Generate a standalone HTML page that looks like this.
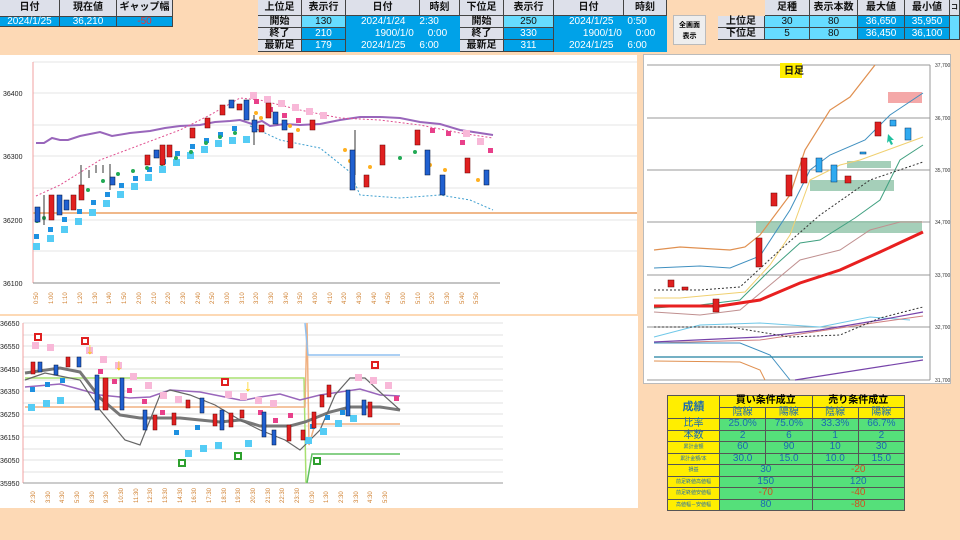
<!DOCTYPE html><html><head><meta charset="utf-8"><style>
*{margin:0;padding:0;box-sizing:border-box}
body{width:960px;height:540px;background:#fdd9b5;position:relative;overflow:hidden;font-family:"Liberation Sans","Noto Sans CJK JP",sans-serif;}
.c{position:absolute;font-size:10px;text-align:center;line-height:12px;border-right:1px solid #444;border-bottom:1px solid #444}
.h{background:#dde0ea;color:#111;font-weight:bold}
.b{background:#00a2e8;color:#fff}
.lb{background:#66dcff;color:#111}
.w{position:absolute;background:#fff}
table{position:absolute;border-collapse:collapse;font-size:10px}
td{border:1px solid #555;text-align:center;height:11.5px;padding:0;line-height:10px}
</style></head><body>
<div class="c h" style="left:0;top:0;width:60px;height:17px;line-height:16px">日付</div>
<div class="c h" style="left:60px;top:0;width:57px;height:17px;line-height:16px">現在値</div>
<div class="c h" style="left:117px;top:0;width:56px;height:17px;line-height:16px">ギャップ幅</div>
<div class="c b" style="left:0;top:17px;width:60px;height:10px;line-height:9px">2024/1/25</div>
<div class="c b" style="left:60px;top:17px;width:57px;height:10px;line-height:9px">36,210</div>
<div class="c b" style="left:117px;top:17px;width:56px;height:10px;line-height:9px;color:#e33">-50</div>
<div class="c h" style="left:258px;top:0;width:44px;height:16px;line-height:15px">上位足</div>
<div class="c h" style="left:302px;top:0;width:44px;height:16px;line-height:15px">表示行</div>
<div class="c h" style="left:346px;top:0;width:74px;height:16px;line-height:15px">日付</div>
<div class="c h" style="left:420px;top:0;width:40px;height:16px;line-height:15px">時刻</div>
<div class="c h" style="left:460px;top:0;width:44px;height:16px;line-height:15px">下位足</div>
<div class="c h" style="left:504px;top:0;width:50px;height:16px;line-height:15px">表示行</div>
<div class="c h" style="left:554px;top:0;width:70px;height:16px;line-height:15px">日付</div>
<div class="c h" style="left:624px;top:0;width:43px;height:16px;line-height:15px">時刻</div>
<div class="c h" style="left:258px;top:16px;width:44px;height:12px">開始</div>
<div class="c h" style="left:258px;top:28px;width:44px;height:12px">終了</div>
<div class="c h" style="left:258px;top:40px;width:44px;height:12px">最新足</div>
<div class="c lb" style="left:302px;top:16px;width:44px;height:12px">130</div>
<div class="c b" style="left:302px;top:28px;width:44px;height:12px">210</div>
<div class="c b" style="left:302px;top:40px;width:44px;height:12px">179</div>
<div class="c b" style="left:346px;top:16px;width:114px;height:36px;border:none;text-align:left;line-height:12px;padding-left:15px">2024/1/24&nbsp;&nbsp;&nbsp;&nbsp;&nbsp;2:30<br>&nbsp;&nbsp;&nbsp;&nbsp;&nbsp;1900/1/0&nbsp;&nbsp;&nbsp;&nbsp;&nbsp;0:00<br>2024/1/25&nbsp;&nbsp;&nbsp;&nbsp;&nbsp;6:00</div>
<div class="c h" style="left:460px;top:16px;width:44px;height:12px">開始</div>
<div class="c h" style="left:460px;top:28px;width:44px;height:12px">終了</div>
<div class="c h" style="left:460px;top:40px;width:44px;height:12px">最新足</div>
<div class="c lb" style="left:504px;top:16px;width:50px;height:12px">250</div>
<div class="c b" style="left:504px;top:28px;width:50px;height:12px">330</div>
<div class="c b" style="left:504px;top:40px;width:50px;height:12px">311</div>
<div class="c b" style="left:554px;top:16px;width:113px;height:36px;border:none;text-align:left;line-height:12px;padding-left:15px">2024/1/25&nbsp;&nbsp;&nbsp;&nbsp;&nbsp;0:50<br>&nbsp;&nbsp;&nbsp;&nbsp;&nbsp;1900/1/0&nbsp;&nbsp;&nbsp;&nbsp;&nbsp;0:00<br>2024/1/25&nbsp;&nbsp;&nbsp;&nbsp;&nbsp;6:00</div>
<div style="position:absolute;left:673px;top:15px;width:33px;height:30px;background:#eee;border:1px solid #bbb;font-size:7px;line-height:11px;text-align:center;padding-top:4px;font-weight:bold">全画面<br>表示</div>
<div class="c h" style="left:765px;top:0;width:45px;height:16px;line-height:15px">足種</div>
<div class="c h" style="left:810px;top:0;width:48px;height:16px;line-height:15px">表示本数</div>
<div class="c h" style="left:858px;top:0;width:47px;height:16px;line-height:15px">最大値</div>
<div class="c h" style="left:905px;top:0;width:45px;height:16px;line-height:15px">最小値</div>
<div class="c h" style="left:950px;top:0;width:10px;height:16px;line-height:15px;font-size:7px">コマ</div>
<div class="c h" style="left:718px;top:16px;width:47px;height:12px">上位足</div>
<div class="c h" style="left:718px;top:28px;width:47px;height:12px">下位足</div>
<div class="c lb" style="left:765px;top:16px;width:45px;height:12px">30</div>
<div class="c lb" style="left:765px;top:28px;width:45px;height:12px">5</div>
<div class="c lb" style="left:810px;top:16px;width:48px;height:12px">80</div>
<div class="c lb" style="left:810px;top:28px;width:48px;height:12px">80</div>
<div class="c b" style="left:858px;top:16px;width:47px;height:12px">36,650</div>
<div class="c b" style="left:858px;top:28px;width:47px;height:12px">36,450</div>
<div class="c b" style="left:905px;top:16px;width:45px;height:12px">35,950</div>
<div class="c b" style="left:905px;top:28px;width:45px;height:12px">36,100</div>
<div class="c lb" style="left:950px;top:16px;width:10px;height:24px"></div>

<div class="w" style="left:0;top:55px;width:637px;height:259px"></div>
<svg style="position:absolute;left:0;top:0" width="960" height="540" font-family="Liberation Sans" >
<g font-size="7" fill="#222"><text x="3" y="96">36400</text><text x="3" y="159">36300</text><text x="3" y="223">36200</text><text x="3" y="286">36100</text></g>
<g stroke="#e4e4e4" stroke-width="1"><line x1="33" y1="62" x2="637" y2="62"/><line x1="33" y1="93" x2="637" y2="93"/><line x1="33" y1="125" x2="637" y2="125"/><line x1="33" y1="156" x2="637" y2="156"/><line x1="33" y1="188" x2="637" y2="188"/><line x1="33" y1="220" x2="637" y2="220"/><line x1="33" y1="251" x2="637" y2="251"/></g>
<line x1="33" y1="62" x2="33" y2="283" stroke="#f2a0a0"/>
<line x1="33" y1="283" x2="500" y2="283" stroke="#888"/>
<line x1="33" y1="213" x2="637" y2="213" stroke="#f0b88a" stroke-width="2"/>
<polyline fill="none" stroke="#9966bb" stroke-width="2" points="36,143 44,143 52,138 60,140 68,140 80,136 100,132 112,136 130,133 150,131 165,128 180,126 200,125 215,122 230,121 240,120 252,124 262,121 270,126 285,124 300,125 320,124 340,120 360,117 380,117 400,118 420,122 440,124 460,130 480,133 493,135"/>
<polyline fill="none" stroke="#e05090" stroke-width="1" stroke-dasharray="2,2" points="36,196 60,185 100,160 140,145 180,130 210,115 240,98 260,100 300,110 340,118 380,120 420,125 460,133 493,138"/>
<polyline fill="none" stroke="#40a0d0" stroke-width="1" stroke-dasharray="2,2" points="250,126 280,140 320,148 350,172 360,195 400,198 440,195 470,200 493,210"/>
<g fill="#55ccf5"><rect x="33" y="243" width="7" height="7"/><rect x="47" y="235" width="7" height="7"/><rect x="61" y="226" width="7" height="7"/><rect x="75" y="218" width="7" height="7"/><rect x="89" y="209" width="7" height="7"/><rect x="103" y="200" width="7" height="7"/><rect x="117" y="191" width="7" height="7"/><rect x="131" y="183" width="7" height="7"/><rect x="145" y="174" width="7" height="7"/><rect x="159" y="166" width="7" height="7"/><rect x="173" y="159" width="7" height="7"/><rect x="187" y="152" width="7" height="7"/><rect x="201" y="146" width="7" height="7"/><rect x="215" y="140" width="7" height="7"/><rect x="229" y="137" width="7" height="7"/><rect x="243" y="136" width="7" height="7"/></g>
<g fill="#1e90e0"><rect x="34" y="234" width="5" height="5"/><rect x="48" y="227" width="5" height="5"/><rect x="62" y="217" width="5" height="5"/><rect x="77" y="209" width="5" height="5"/><rect x="91" y="200" width="5" height="5"/><rect x="105" y="192" width="5" height="5"/><rect x="119" y="183" width="5" height="5"/><rect x="133" y="176" width="5" height="5"/><rect x="147" y="167" width="5" height="5"/><rect x="161" y="159" width="5" height="5"/><rect x="175" y="151" width="5" height="5"/><rect x="190" y="144" width="5" height="5"/><rect x="204" y="138" width="5" height="5"/><rect x="218" y="132" width="5" height="5"/><rect x="232" y="126" width="5" height="5"/></g>
<g fill="#22aa55"><circle cx="37" cy="221" r="2"/><circle cx="44" cy="218" r="2"/><circle cx="52" cy="212" r="2"/><circle cx="60" cy="208" r="2"/><circle cx="73" cy="204" r="2"/><circle cx="88" cy="190" r="2"/><circle cx="103" cy="181" r="2"/><circle cx="118" cy="174" r="2"/><circle cx="133" cy="171" r="2"/><circle cx="147" cy="168" r="2"/><circle cx="162" cy="164" r="2"/><circle cx="176" cy="158" r="2"/><circle cx="191" cy="152" r="2"/><circle cx="206" cy="143" r="2"/><circle cx="220" cy="137" r="2"/><circle cx="235" cy="133" r="2"/><circle cx="400" cy="158" r="2"/><circle cx="415" cy="152" r="2"/></g>
<g fill="#ffb020"><circle cx="256" cy="113" r="2"/><circle cx="261" cy="118" r="2"/><circle cx="290" cy="126" r="2"/><circle cx="298" cy="130" r="2"/><circle cx="345" cy="150" r="2"/><circle cx="350" cy="161" r="2"/><circle cx="370" cy="167" r="2"/><circle cx="430" cy="165" r="2"/><circle cx="445" cy="170" r="2"/><circle cx="478" cy="180" r="2"/></g>
<g fill="#f8b8d8"><rect x="250" y="92" width="7" height="7"/><rect x="264" y="96" width="7" height="7"/><rect x="278" y="100" width="7" height="7"/><rect x="292" y="104" width="7" height="7"/><rect x="306" y="108" width="7" height="7"/><rect x="320" y="112" width="7" height="7"/><rect x="463" y="130" width="7" height="7"/><rect x="477" y="138" width="7" height="7"/></g>
<g fill="#e8408a"><rect x="254" y="99" width="5" height="5"/><rect x="268" y="107" width="5" height="5"/><rect x="282" y="113" width="5" height="5"/><rect x="296" y="118" width="5" height="5"/><rect x="310" y="122" width="5" height="5"/><rect x="430" y="128" width="5" height="5"/><rect x="446" y="131" width="5" height="5"/><rect x="460" y="140" width="5" height="5"/><rect x="488" y="148" width="5" height="5"/></g>
<g stroke="#333" stroke-width="1"><line x1="44" y1="195" x2="44" y2="225"/><line x1="81" y1="165" x2="81" y2="200"/><line x1="89" y1="170" x2="89" y2="178"/><line x1="96" y1="165" x2="96" y2="173"/><line x1="103" y1="165" x2="103" y2="173"/><line x1="110" y1="164" x2="110" y2="190"/><line x1="254" y1="115" x2="254" y2="145"/><line x1="355" y1="130" x2="355" y2="175"/></g>
<g fill="#e02020" stroke="#600" stroke-width=".5"><rect x="49" y="195" width="5" height="25"/><rect x="71" y="195" width="5" height="15"/><rect x="79" y="185" width="5" height="15"/><rect x="145" y="155" width="5" height="10"/><rect x="160" y="145" width="5" height="20"/><rect x="167" y="145" width="5" height="12"/><rect x="190" y="128" width="5" height="10"/><rect x="205" y="118" width="5" height="10"/><rect x="220" y="105" width="5" height="10"/><rect x="237" y="104" width="5" height="6"/><rect x="259" y="125" width="5" height="7"/><rect x="266" y="103" width="5" height="15"/><rect x="288" y="133" width="5" height="15"/><rect x="310" y="120" width="5" height="10"/><rect x="364" y="175" width="5" height="12"/><rect x="380" y="145" width="5" height="20"/><rect x="415" y="130" width="5" height="15"/><rect x="465" y="158" width="5" height="15"/></g>
<g fill="#2060d0" stroke="#013" stroke-width=".5"><rect x="35" y="207" width="5" height="15"/><rect x="57" y="195" width="5" height="20"/><rect x="64" y="200" width="5" height="10"/><rect x="110" y="177" width="5" height="8"/><rect x="154" y="150" width="5" height="8"/><rect x="229" y="100" width="5" height="8"/><rect x="244" y="100" width="5" height="20"/><rect x="252" y="120" width="5" height="12"/><rect x="273" y="112" width="5" height="12"/><rect x="282" y="120" width="5" height="10"/><rect x="350" y="150" width="5" height="40"/><rect x="425" y="150" width="5" height="25"/><rect x="440" y="175" width="5" height="20"/><rect x="484" y="170" width="5" height="15"/></g>
<g font-size="6" fill="#d08030"><text transform="translate(38,304) rotate(-90)">0:50</text><text transform="translate(53,304) rotate(-90)">1:00</text><text transform="translate(67,304) rotate(-90)">1:10</text><text transform="translate(82,304) rotate(-90)">1:20</text><text transform="translate(97,304) rotate(-90)">1:30</text><text transform="translate(111,304) rotate(-90)">1:40</text><text transform="translate(126,304) rotate(-90)">1:50</text><text transform="translate(141,304) rotate(-90)">2:00</text><text transform="translate(156,304) rotate(-90)">2:10</text><text transform="translate(170,304) rotate(-90)">2:20</text><text transform="translate(185,304) rotate(-90)">2:30</text><text transform="translate(200,304) rotate(-90)">2:40</text><text transform="translate(214,304) rotate(-90)">2:50</text><text transform="translate(229,304) rotate(-90)">3:00</text><text transform="translate(244,304) rotate(-90)">3:10</text><text transform="translate(258,304) rotate(-90)">3:20</text><text transform="translate(273,304) rotate(-90)">3:30</text><text transform="translate(288,304) rotate(-90)">3:40</text><text transform="translate(302,304) rotate(-90)">3:50</text><text transform="translate(317,304) rotate(-90)">4:00</text><text transform="translate(332,304) rotate(-90)">4:10</text><text transform="translate(346,304) rotate(-90)">4:20</text><text transform="translate(361,304) rotate(-90)">4:30</text><text transform="translate(376,304) rotate(-90)">4:40</text><text transform="translate(390,304) rotate(-90)">4:50</text><text transform="translate(405,304) rotate(-90)">5:00</text><text transform="translate(420,304) rotate(-90)">5:10</text><text transform="translate(434,304) rotate(-90)">5:20</text><text transform="translate(449,304) rotate(-90)">5:30</text><text transform="translate(464,304) rotate(-90)">5:40</text><text transform="translate(478,304) rotate(-90)">5:50</text></g>
</svg>

<div class="w" style="left:0;top:316px;width:638px;height:192px"></div>
<svg style="position:absolute;left:0;top:0" width="960" height="540" font-family="Liberation Sans">
<g font-size="7" fill="#222"><text x="0" y="326">36650</text><text x="0" y="349">36550</text><text x="0" y="372">36450</text><text x="0" y="394">36350</text><text x="0" y="417">36250</text><text x="0" y="440">36150</text><text x="0" y="463">36050</text><text x="0" y="486">35950</text></g>
<g stroke="#e2e2e2"><line x1="23" y1="323" x2="503" y2="323"/><line x1="23" y1="335" x2="503" y2="335"/><line x1="23" y1="346" x2="503" y2="346"/><line x1="23" y1="357" x2="503" y2="357"/><line x1="23" y1="369" x2="503" y2="369"/><line x1="23" y1="380" x2="503" y2="380"/><line x1="23" y1="391" x2="503" y2="391"/><line x1="23" y1="403" x2="503" y2="403"/><line x1="23" y1="414" x2="503" y2="414"/><line x1="23" y1="426" x2="503" y2="426"/><line x1="23" y1="437" x2="503" y2="437"/><line x1="23" y1="449" x2="503" y2="449"/><line x1="23" y1="460" x2="503" y2="460"/><line x1="23" y1="472" x2="503" y2="472"/></g>
<line x1="23" y1="323" x2="23" y2="483" stroke="#f2a0a0"/>
<line x1="23" y1="483" x2="503" y2="483" stroke="#999"/>
<polyline fill="none" stroke="#a8e070" stroke-width="1.5" points="25,378 240,378 245,378 300,378 304,378 306,483"/>
<polyline fill="none" stroke="#f0b080" stroke-width="1.5" points="25,407 300,407 305,407 307,323 309,445 315,424 400,424"/>
<polyline fill="none" stroke="#90c0f0" stroke-width="1.5" points="305,323 308,355 400,355"/>
<polyline fill="none" stroke="#60c060" stroke-width="1.5" points="307,483 312,454 400,454"/>
<polyline fill="none" stroke="#9966bb" stroke-width="1.5" points="25,387 60,384 75,388 100,395 130,398 150,397 170,390 200,392 240,400 245,400 260,397 280,394 300,400 320,395 360,389 380,395 400,396"/>
<polyline fill="none" stroke="#777" stroke-width="3" points="25,373 60,368 80,372 100,398 120,415 140,418 180,418 200,420 220,422 240,420 260,426 290,426 305,422 330,412 350,407 380,407 400,410"/>
<polyline fill="none" stroke="#666" stroke-width="1.2" points="25,380 45,373 60,376 80,380 100,410 125,440 140,445 150,420 160,395 170,390 190,395 215,405 240,420 260,430 285,440 300,450 320,430 335,395 350,378 365,378 380,392 400,410"/>
<g fill="#f8b8d8"><rect x="32" y="342" width="7" height="7"/><rect x="47" y="344" width="7" height="7"/><rect x="86" y="347" width="7" height="7"/><rect x="100" y="356" width="7" height="7"/><rect x="115" y="362" width="7" height="7"/><rect x="130" y="373" width="7" height="7"/><rect x="145" y="382" width="7" height="7"/><rect x="160" y="392" width="7" height="7"/><rect x="175" y="396" width="7" height="7"/><rect x="225" y="391" width="7" height="7"/><rect x="240" y="393" width="7" height="7"/><rect x="255" y="397" width="7" height="7"/><rect x="270" y="400" width="7" height="7"/><rect x="355" y="374" width="7" height="7"/><rect x="370" y="377" width="7" height="7"/><rect x="385" y="382" width="7" height="7"/></g>
<g fill="#e8408a"><rect x="98" y="369" width="5" height="5"/><rect x="112" y="379" width="5" height="5"/><rect x="127" y="388" width="5" height="5"/><rect x="142" y="399" width="5" height="5"/><rect x="160" y="410" width="5" height="5"/><rect x="258" y="410" width="5" height="5"/><rect x="273" y="418" width="5" height="5"/><rect x="288" y="413" width="5" height="5"/><rect x="394" y="396" width="5" height="5"/></g>
<g fill="#55ccf5"><rect x="28" y="404" width="7" height="7"/><rect x="43" y="400" width="7" height="7"/><rect x="57" y="397" width="7" height="7"/><rect x="185" y="450" width="7" height="7"/><rect x="200" y="445" width="7" height="7"/><rect x="215" y="442" width="7" height="7"/><rect x="245" y="440" width="7" height="7"/><rect x="305" y="437" width="7" height="7"/><rect x="320" y="428" width="7" height="7"/><rect x="335" y="420" width="7" height="7"/><rect x="350" y="415" width="7" height="7"/></g>
<g fill="#1e90e0"><rect x="30" y="387" width="5" height="5"/><rect x="45" y="382" width="5" height="5"/><rect x="60" y="378" width="5" height="5"/><rect x="174" y="430" width="5" height="5"/><rect x="195" y="425" width="5" height="5"/><rect x="310" y="424" width="5" height="5"/><rect x="325" y="415" width="5" height="5"/><rect x="340" y="410" width="5" height="5"/></g>
<g fill="#e02020" stroke="#600" stroke-width=".5"><rect x="31" y="362" width="4" height="12"/><rect x="66" y="357" width="4" height="10"/><rect x="103" y="378" width="5" height="32"/><rect x="153" y="415" width="4" height="15"/><rect x="172" y="413" width="4" height="12"/><rect x="186" y="400" width="4" height="8"/><rect x="213" y="414" width="4" height="12"/><rect x="229" y="413" width="4" height="14"/><rect x="240" y="410" width="4" height="8"/><rect x="287" y="425" width="4" height="16"/><rect x="301" y="430" width="4" height="10"/><rect x="312" y="412" width="4" height="16"/><rect x="320" y="395" width="4" height="12"/><rect x="327" y="385" width="4" height="12"/><rect x="368" y="402" width="4" height="15"/></g>
<g fill="#2060d0" stroke="#013" stroke-width=".5"><rect x="38" y="362" width="4" height="10"/><rect x="54" y="365" width="4" height="10"/><rect x="77" y="357" width="4" height="10"/><rect x="95" y="375" width="4" height="35"/><rect x="120" y="378" width="4" height="32"/><rect x="143" y="410" width="4" height="20"/><rect x="200" y="398" width="4" height="15"/><rect x="220" y="410" width="4" height="20"/><rect x="262" y="412" width="4" height="25"/><rect x="272" y="430" width="4" height="15"/><rect x="346" y="390" width="4" height="26"/><rect x="362" y="400" width="4" height="15"/></g>
<g stroke="#2ea02e" fill="#fff" stroke-width="2"><rect x="179" y="460" width="6" height="6"/><rect x="235" y="453" width="6" height="6"/><rect x="314" y="458" width="6" height="6"/></g>
<g stroke="#e02020" fill="#fff" stroke-width="2"><rect x="35" y="334" width="6" height="6"/><rect x="82" y="338" width="6" height="6"/><rect x="222" y="379" width="6" height="6"/><rect x="372" y="362" width="6" height="6"/></g>
<g fill="#ffcc00" font-size="16" font-weight="bold"><text x="86" y="354">↓</text><text x="115" y="370">↓</text><text x="244" y="391">↓</text></g>
<g font-size="6" fill="#d08030"><text transform="translate(35,503) rotate(-90)">2:30</text><text transform="translate(50,503) rotate(-90)">3:30</text><text transform="translate(64,503) rotate(-90)">4:30</text><text transform="translate(79,503) rotate(-90)">5:30</text><text transform="translate(94,503) rotate(-90)">8:30</text><text transform="translate(108,503) rotate(-90)">9:30</text><text transform="translate(123,503) rotate(-90)">10:30</text><text transform="translate(138,503) rotate(-90)">11:30</text><text transform="translate(152,503) rotate(-90)">12:30</text><text transform="translate(167,503) rotate(-90)">13:30</text><text transform="translate(182,503) rotate(-90)">14:30</text><text transform="translate(196,503) rotate(-90)">16:30</text><text transform="translate(211,503) rotate(-90)">17:30</text><text transform="translate(226,503) rotate(-90)">18:30</text><text transform="translate(240,503) rotate(-90)">19:30</text><text transform="translate(255,503) rotate(-90)">20:30</text><text transform="translate(270,503) rotate(-90)">21:30</text><text transform="translate(284,503) rotate(-90)">22:30</text><text transform="translate(299,503) rotate(-90)">23:30</text><text transform="translate(314,503) rotate(-90)">0:30</text><text transform="translate(328,503) rotate(-90)">1:30</text><text transform="translate(343,503) rotate(-90)">2:30</text><text transform="translate(358,503) rotate(-90)">3:30</text><text transform="translate(372,503) rotate(-90)">4:30</text><text transform="translate(387,503) rotate(-90)">5:30</text></g>
</svg>

<div class="w" style="left:643px;top:54px;width:308px;height:330px;border:1px solid #bbb"></div>
<svg style="position:absolute;left:0;top:0" width="960" height="540" font-family="Liberation Sans">
<g stroke="#999"><line x1="647" y1="65" x2="930" y2="65"/><line x1="647" y1="118" x2="930" y2="118"/><line x1="647" y1="170" x2="930" y2="170"/><line x1="647" y1="222" x2="930" y2="222"/><line x1="647" y1="275" x2="930" y2="275"/><line x1="647" y1="327" x2="930" y2="327"/><line x1="647" y1="380" x2="930" y2="380"/></g>
<line x1="930" y1="65" x2="930" y2="380" stroke="#999"/>
<g font-size="5" fill="#333"><text x="935" y="67">37,700</text><text x="935" y="120">36,700</text><text x="935" y="172">35,700</text><text x="935" y="224">34,700</text><text x="935" y="277">33,700</text><text x="935" y="329">32,700</text><text x="935" y="382">31,700</text></g>
<rect x="780" y="63" width="22" height="15" fill="#ffee00"/><text x="784" y="74" font-size="10" font-weight="bold" fill="#111" font-family="Liberation Sans,Noto Sans CJK JP,sans-serif">日足</text>
<g fill="#8fc4a8" opacity=".8"><rect x="847" y="161" width="44" height="7"/><rect x="810" y="180" width="84" height="11"/><rect x="756" y="221" width="166" height="12"/></g>
<rect x="888" y="92" width="34" height="11" fill="#f4a8a8"/>
<polyline fill="none" stroke="#e09050" stroke-width="1.2" points="654,250 680,247 730,250 745,247 760,235 790,195 805,150 830,110 850,97 875,65"/>
<polyline fill="none" stroke="#4090c0" stroke-width="1" points="654,268 700,266 730,268 760,256 790,210 810,170 830,155 865,140 890,115 923,93"/>
<polyline fill="none" stroke="#f0d070" stroke-width="1" points="654,298 680,298 745,292 770,265 790,235 810,180 840,165 860,160 923,137"/>
<polyline fill="none" stroke="#40a080" stroke-width="1" points="654,308 700,305 740,300 770,270 800,243 820,240 855,218 880,200 900,160 923,145"/>
<polyline fill="none" stroke="#333" stroke-width="1" stroke-dasharray="2,2" points="654,290 700,290 740,287 780,250 820,215 870,180 923,162"/>
<polyline fill="none" stroke="#c09090" stroke-width="1" points="654,312 700,315 740,310 770,285 800,260 840,250 870,230 900,222 923,222"/>
<polyline fill="none" stroke="#e82020" stroke-width="3" points="654,306 720,306 760,300 800,283 840,270 880,252 923,232"/>
<polyline fill="none" stroke="#70c8e8" stroke-width="1" points="654,337 700,325 760,323 820,327 870,317 910,320"/>
<polyline fill="none" stroke="#7744aa" stroke-width="1.2" points="654,342 760,337 820,330 880,320 923,312"/>
<polyline fill="none" stroke="#d08080" stroke-width="1" points="654,343 760,340 880,322 923,316"/>
<polyline fill="none" stroke="#333" stroke-width="1" stroke-dasharray="2,2" points="654,327 730,327 790,337 840,335 880,318 923,307"/>
<polyline fill="none" stroke="#4090c0" stroke-width="1" points="654,343 740,343 770,355 790,380"/>
<line x1="654" y1="357" x2="923" y2="357" stroke="#2080a0" stroke-width="1.2"/>
<polyline fill="none" stroke="#e09050" stroke-width="1" points="654,361 740,362 760,370 765,380"/>
<polyline fill="none" stroke="#7744aa" stroke-width="1.2" points="795,380 923,360"/>
<g fill="#e02020" stroke="#600" stroke-width=".5"><rect x="668" y="280" width="6" height="7"/><rect x="682" y="287" width="6" height="3"/><rect x="713" y="299" width="6" height="13"/><rect x="756" y="238" width="6" height="29"/><rect x="771" y="193" width="6" height="13"/><rect x="786" y="175" width="6" height="21"/><rect x="801" y="158" width="6" height="25"/><rect x="845" y="176" width="6" height="7"/><rect x="875" y="122" width="6" height="14"/></g>
<g fill="#30aaf0" stroke="#036" stroke-width=".5"><rect x="816" y="158" width="6" height="14"/><rect x="831" y="165" width="6" height="17"/><rect x="860" y="152" width="6" height="2"/><rect x="890" y="120" width="6" height="6"/><rect x="905" y="128" width="6" height="12"/></g>
<path d="M888 134 l6 6 -3 0 2 4 -2 1 -2 -4 -2 2z" fill="#20c0a0"/>
</svg>

<table style="left:667px;top:395px;width:238px">
<tr style="background:#ffee00;font-weight:bold"><td rowspan="2" style="width:52px;color:#1a6ab0;font-size:11px">成績</td><td colspan="2">買い条件成立</td><td colspan="2">売り条件成立</td></tr>
<tr style="background:#ffee00;color:#1a6ab0"><td>陰線</td><td>陽線</td><td>陰線</td><td>陽線</td></tr>
<tr style="background:#55e07a;color:#1a6ab0"><td style="background:#ffee00">比率</td><td>25.0%</td><td>75.0%</td><td>33.3%</td><td>66.7%</td></tr>
<tr style="background:#55e07a;color:#1a6ab0"><td style="background:#ffee00">本数</td><td>2</td><td>6</td><td>1</td><td>2</td></tr>
<tr style="background:#55e07a;color:#1a6ab0"><td style="background:#ffee00;font-size:5px">累計金額</td><td>60</td><td>90</td><td>10</td><td>30</td></tr>
<tr style="background:#55e07a;color:#1a6ab0"><td style="background:#ffee00;font-size:5px">累計金額/本</td><td>30.0</td><td>15.0</td><td>10.0</td><td>15.0</td></tr>
<tr style="background:#55e07a;color:#1a6ab0"><td style="background:#ffee00;font-size:5px">損益</td><td colspan="2">30</td><td colspan="2" style="color:#d05020">-20</td></tr>
<tr style="background:#55e07a;color:#1a6ab0"><td style="background:#ffee00;font-size:5px">前足終値高値幅</td><td colspan="2">150</td><td colspan="2">120</td></tr>
<tr style="background:#55e07a;color:#d05020"><td style="background:#ffee00;font-size:5px;color:#1a6ab0">前足終値安値幅</td><td colspan="2">-70</td><td colspan="2">-40</td></tr>
<tr style="background:#55e07a;color:#1a6ab0"><td style="background:#ffee00;font-size:5px">高値幅－安値幅</td><td colspan="2">80</td><td colspan="2" style="color:#d05020">-80</td></tr>
</table>
</body></html>
